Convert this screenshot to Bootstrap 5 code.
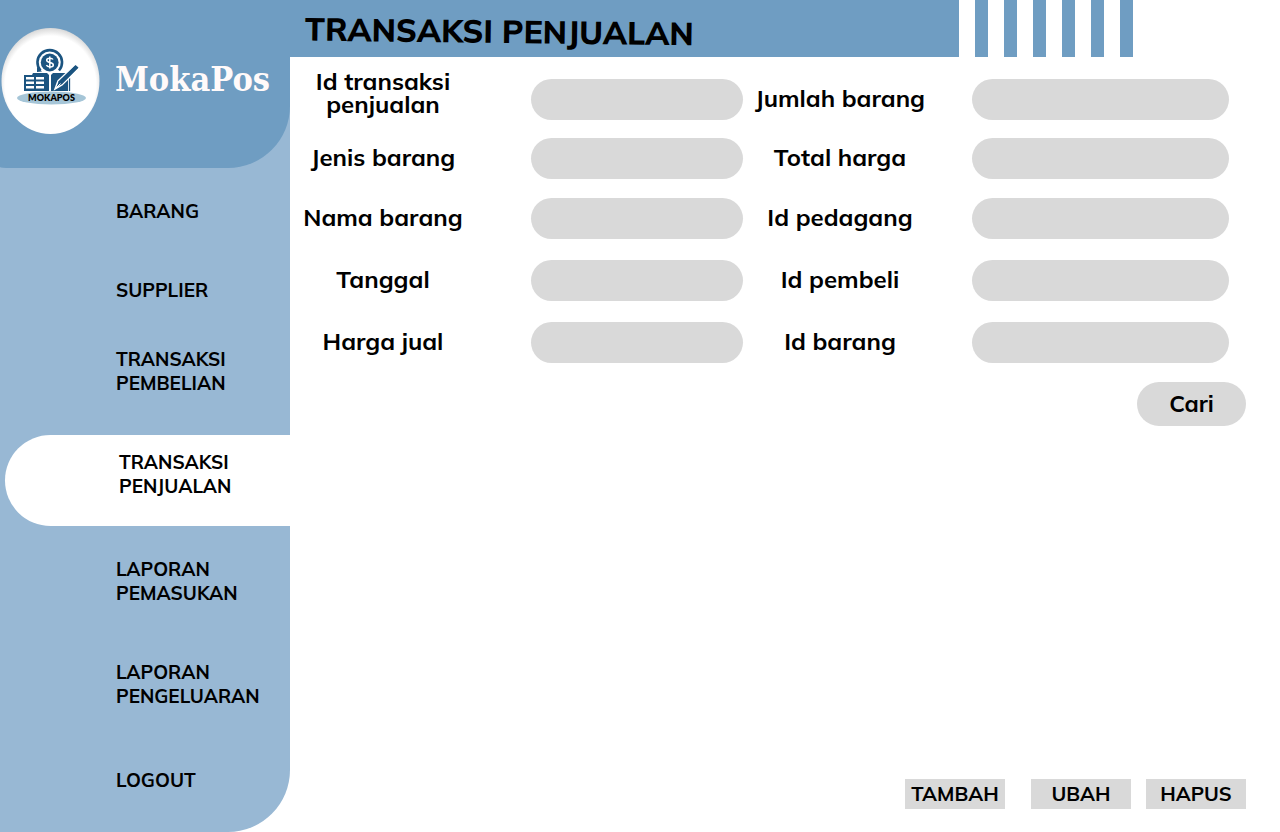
<!DOCTYPE html>
<html lang="id">
<head>
<meta charset="utf-8">
<meta name="viewport" content="width=device-width, initial-scale=1">
<title>MokaPos - Transaksi Penjualan</title>
<link href="https://cdn.jsdelivr.net/npm/bootstrap@5.3.0/dist/css/bootstrap.min.css" rel="stylesheet">
<style>
  :root { --moka-blue: #6f9dc2; --moka-light: #98b8d4; --moka-grey: #d9d9d9; }
  body { font-family: Mulish, Lato, sans-serif; color: #000; background: #fff; font-weight: 700; }
  .side-panel { width: 290px; background: var(--moka-light); border-bottom-right-radius: 62px; }
  .brand-box { height: 168px; padding: 0 0 6px 1px; background: var(--moka-blue); border-radius: 0 0 62px 10px / 0 0 62px 1px; }
  .brand-name { font-family: "DejaVu Serif Condensed", "DejaVu Serif", serif; font-size: 34px; line-height: 40px; color: #fffafa; margin: 0 0 4px 15px; }
  .side-menu { display: grid; grid-template-rows: 79px 69px 88px 122px 103px 108px 24px; align-items: start; padding: 31px 0 40px 5px; font-size: 19px; line-height: 24px; }
  .side-menu a { display: block; padding-left: 111px; color: #000; text-decoration: none; }
  .side-menu a.current { padding: 15px 0 28px 114px; background: #fff; border-radius: 46px 0 0 46px; }
  .top-strip { height: 57px; padding-right: 147px; }
  .title-bar { background: var(--moka-blue); padding: 4px 0 0 15px; }
  .title-bar h1 { font-size: 32px; line-height: 40px; font-weight: 800; transform: rotate(.7deg); }
  .stripe { width: 13px; background: var(--moka-blue); }
  .entry-grid { display: grid; grid-template-columns: 186px 267fr 194px 292fr; grid-template-rows: 59px 60px 62px 62px 41px; align-items: start; padding: 22px 51px 0 0; }
  .entry-grid label { height: 38px; font-size: 24px; line-height: 24px; display: flex; align-items: center; justify-content: center; text-align: center; }
  .entry-grid label.two-line { height: 28px; line-height: 23px; }
  .field { height: 41px; border: 0; background: var(--moka-grey); border-radius: 21px; padding: 0 20px; min-width: 0; }
  .field-a { margin-left: 55px; }
  .field-b { margin-left: 35px; }
  .end-row { padding-right: 34px; }
  .find-row { padding-top: 19px; }
  .act-row { padding-bottom: 23px; }
  .btn-find { width: 109px; height: 44px; border: 0; border-radius: 22px; background: var(--moka-grey); font-size: 23px; font-weight: 700; color: #000; }
  .btn-act { width: 100px; height: 30px; border: 0; padding: 0; background: var(--moka-grey); font-size: 20px; line-height: 30px; font-weight: 700; color: #000; margin-left: 15px; }
  .btn-act:first-child { margin-right: 11px; }
</style>
</head>
<body>
<div class="d-flex min-vh-100">
  <aside class="side-panel flex-shrink-0">
    <div class="brand-box d-flex align-items-center">
      <svg width="99" height="108" viewBox="0 0 99 108" role="img" aria-label="Logo MokaPos">
        <defs>
          <radialGradient id="rim" cx=".5" cy=".54" r=".54"><stop offset=".86" stop-color="#fff"/><stop offset="1" stop-color="#d8d8d8"/></radialGradient>
        </defs>
        <ellipse cx="49.500" cy="54" rx="49" ry="53" fill="url(#rim)"/>
        <ellipse cx="50.500" cy="71" rx="34.500" ry="6.500" fill="#a5c5d7"/>
        <g fill="none" stroke="#1b5480">
          <path d="M39.500 43.500A12.300 12.300 0 1 1 58 43.500" stroke-width="2.600"/>
          <path d="M36 40l5 4.500-5 .5z" fill="#1b5480" stroke="none"/>
        </g>
        <circle cx="48.700" cy="35.500" r="8.900" fill="#1b5480"/>
        <path d="M52 32.500c-.8-1.500-6.300-2-6.300.8 0 2.900 6.600 1.500 6.600 4.600 0 2.700-5.800 2.500-6.900.3M48.800 29.500v12" fill="none" stroke="#fff" stroke-width="1.500"/>
        <path d="M23 48h8l1-2h14l2 2v16H23z" fill="#1b5480"/>
        <path d="M25 50h8v2.500h-8zM35 50h8v2.500h-8zM25 54.500h8V57h-8zM35 54.500h8V57h-8zM25 59h8v2.500h-8zM35 59h8v2.500h-8z" fill="#fff"/>
        <path d="M50 48l2-2h13l2 2v16H50z" fill="#1b5480"/>
        <path d="M68.500 51v13" stroke="#1b5480" stroke-width="1.300"/>
        <path d="M54 62l3-8 17-16 4 3-17 17z" fill="#1b5480" stroke="#fff" stroke-width="1.500"/>
        <path d="M57 55l17.500-17 3 2.500-17 17z" fill="#1b5480"/>
        <path d="M54.500 61.500l5-5" stroke="#fff" stroke-width="1"/>
        <text x="50.500" y="74" text-anchor="middle" font-family="Lato, sans-serif" font-size="9" font-weight="800">MOKAPOS</text>
      </svg>
      <span class="brand-name">MokaPos</span>
    </div>
    <nav class="side-menu" aria-label="Menu utama">
      <a href="#">BARANG</a>
      <a href="#">SUPPLIER</a>
      <a href="#">TRANSAKSI<br>PEMBELIAN</a>
      <a href="#" class="current" aria-current="page">TRANSAKSI<br>PENJUALAN</a>
      <a href="#">LAPORAN<br>PEMASUKAN</a>
      <a href="#">LAPORAN<br>PENGELUARAN</a>
      <a href="#">LOGOUT</a>
    </nav>
  </aside>
  <main class="flex-grow-1 d-flex flex-column">
    <header class="top-strip d-flex gap-3">
      <div class="title-bar flex-grow-1 d-flex align-items-center"><h1 class="m-0">TRANSAKSI PENJUALAN</h1></div>
      <div class="stripe"></div><div class="stripe"></div><div class="stripe"></div>
      <div class="stripe"></div><div class="stripe"></div><div class="stripe"></div>
    </header>
    <form class="flex-grow-1 d-flex flex-column">
      <div class="entry-grid">
        <label for="idTransaksi" class="two-line">Id transaksi<br>penjualan</label><input id="idTransaksi" class="field field-a" type="text">
        <label for="jumlah">Jumlah barang</label><input id="jumlah" class="field field-b" type="text">
        <label for="jenis">Jenis barang</label><input id="jenis" class="field field-a" type="text">
        <label for="total">Total harga</label><input id="total" class="field field-b" type="text">
        <label for="nama">Nama barang</label><input id="nama" class="field field-a" type="text">
        <label for="pedagang">Id pedagang</label><input id="pedagang" class="field field-b" type="text">
        <label for="tanggal">Tanggal</label><input id="tanggal" class="field field-a" type="text">
        <label for="pembeli">Id pembeli</label><input id="pembeli" class="field field-b" type="text">
        <label for="harga">Harga jual</label><input id="harga" class="field field-a" type="text">
        <label for="barang">Id barang</label><input id="barang" class="field field-b" type="text">
      </div>
      <div class="end-row find-row d-flex justify-content-end"><button type="button" class="btn-find">Cari</button></div>
      <div class="end-row act-row d-flex justify-content-end mt-auto">
        <button type="button" class="btn-act">TAMBAH</button>
        <button type="button" class="btn-act">UBAH</button>
        <button type="button" class="btn-act">HAPUS</button>
      </div>
    </form>
  </main>
</div>
<script src="https://cdn.jsdelivr.net/npm/bootstrap@5.3.0/dist/js/bootstrap.bundle.min.js"></script>
</body>
</html>
